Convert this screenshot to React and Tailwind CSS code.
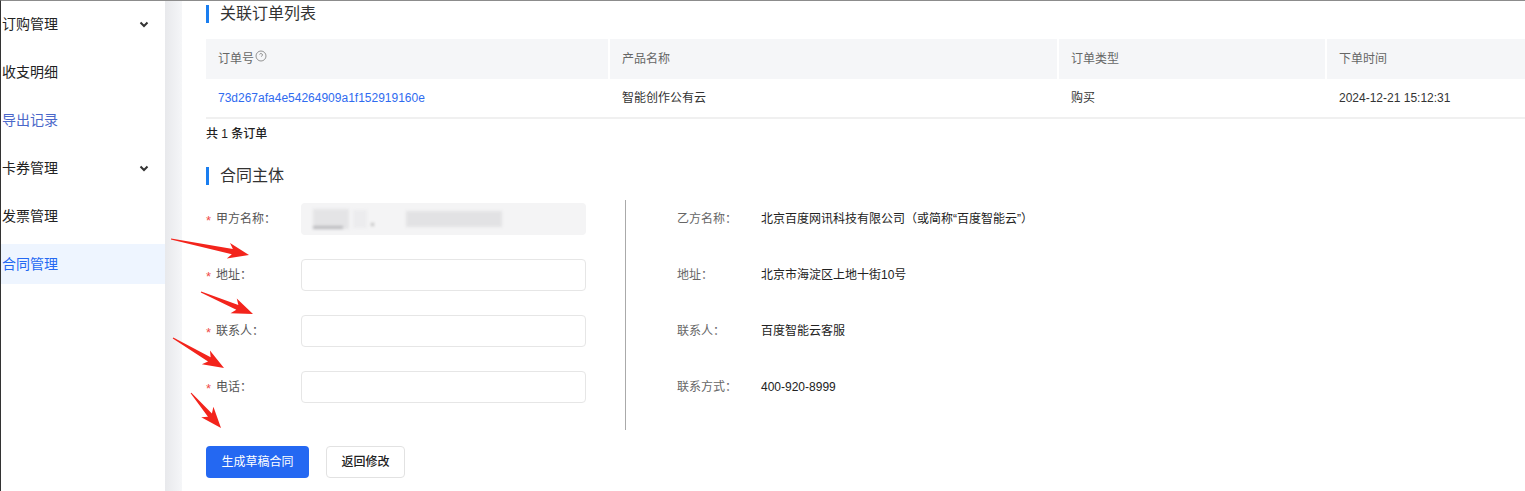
const font = "font-['Liberation_Sans','Noto_Sans_CJK_SC',sans-serif]"

const menu = [
  { label: '订购管理', arrow: true },
  { label: '收支明细' },
  { label: '导出记录', tone: 'text-[#4a67c9]' },
  { label: '卡券管理', arrow: true },
  { label: '发票管理' },
  { label: '合同管理', active: true },
]

const Chevron = () => (
  <svg width="10" height="7" viewBox="0 0 10 7" className="absolute left-[138px] top-[17px]">
    <polyline points="1.5,1.5 5,5 8.5,1.5" fill="none" stroke="#333" strokeWidth="2" />
  </svg>
)

const Sidebar = () => (
  <div className="flex w-[164px] shrink-0 flex-col pt-[3px]">
    {menu.map((m) => (
      <div
        key={m.label}
        className={`relative mb-2 flex h-10 items-center pl-px text-[14px] ${
          m.active ? 'bg-[#eef5ff] text-[#2468f2]' : m.tone || 'text-[#222]'
        }`}
      >
        {m.label}
        {m.arrow && <Chevron />}
      </div>
    ))}
  </div>
)

const Heading = ({ children }) => (
  <div className="flex h-[18px] items-center">
    <span className="h-[18px] w-[3px] bg-[#1a7ef0]" />
    <span className="ml-[11px] text-[16px] leading-[18px] text-[#333]">{children}</span>
  </div>
)

const HelpIcon = () => (
  <svg width="12" height="12" viewBox="0 0 24 24" fill="none" stroke="#888" strokeWidth="1.8" className="mb-[6px] ml-px">
    <circle cx="12" cy="12" r="10" />
    <path d="M9.09 9a3 3 0 0 1 5.83 1c0 2-3 3-3 3" />
    <path d="M12 17h.01" />
  </svg>
)

const OrderTable = () => (
  <div className="mt-4 w-[1340px] text-[12px]">
    <div className="flex h-10 bg-[#f5f6f8] text-[#666]">
      <div className="flex w-[402px] items-center pl-3">
        订单号
        <HelpIcon />
      </div>
      <div className="flex w-[449px] items-center border-l-2 border-white pl-3">产品名称</div>
      <div className="flex w-[268px] items-center border-l-2 border-white pl-3">订单类型</div>
      <div className="flex flex-1 items-center border-l-2 border-white pl-3">下单时间</div>
    </div>
    <div className="flex h-10 border-b-2 border-[#f0f0f0] text-[#333]">
      <div className="flex w-[402px] items-center pl-3 text-[#2f6bf0]">73d267afa4e54264909a1f152919160e</div>
      <div className="flex w-[449px] items-center pl-[14px]">智能创作公有云</div>
      <div className="flex w-[268px] items-center pl-[14px]">购买</div>
      <div className="flex flex-1 items-center pl-[14px]">2024-12-21 15:12:31</div>
    </div>
  </div>
)

const leftRows = [
  { label: '甲方名称', disabled: true },
  { label: '地址' },
  { label: '联系人' },
  { label: '电话' },
]

const rightRows = [
  ['乙方名称：', '北京百度网讯科技有限公司（或简称“百度智能云”）'],
  ['地址：', '北京市海淀区上地十街10号'],
  ['联系人：', '百度智能云客服'],
  ['联系方式：', '400-920-8999'],
]

const BlurredName = () => (
  <div className="flex h-full items-center gap-1 pl-3 blur-[1.5px]">
    <div className="flex h-[20px] w-[36px] flex-col justify-end bg-[#e4e4e6]">
      <div className="h-[3px] w-[30px] bg-[#b8b8bc]" />
    </div>
    <div className="h-[18px] w-[14px] bg-[#ececee]" />
    <div className="mb-[9px] h-[3px] w-[3px] self-end bg-[#bbb]" />
    <div className="ml-[28px] h-[16px] w-[96px] bg-[#e2e2e4]" />
  </div>
)

const ContractForm = () => (
  <div className="mt-[15px] flex text-[12px]">
    <div className="w-[420px] border-r border-[#aaa] pt-[3px] pb-[27px]">
      {leftRows.map((r, i) => (
        <div key={r.label} className={`flex h-8 items-center ${i < 3 ? 'mb-6' : ''}`}>
          <span className="w-[10px] pt-[3px] text-[13px] text-[#f04a4a]">*</span>
          <span className="w-[85px] text-[#555]">{r.label}：</span>
          <div
            className={`h-8 w-[285px] rounded ${
              r.disabled ? 'bg-[#f4f4f5]' : 'border border-[#e6e6e6] bg-white'
            }`}
          >
            {r.disabled && <BlurredName />}
          </div>
        </div>
      ))}
    </div>
    <div className="pl-[51px] pt-[3px]">
      {rightRows.map(([k, v], i) => (
        <div key={k} className={`flex h-8 items-center ${i < 3 ? 'mb-6' : ''}`}>
          <span className="w-[84px] text-[#666]">{k}</span>
          <span className="text-[#222]">{v}</span>
        </div>
      ))}
    </div>
  </div>
)

// annotation arrows: tail x,y then tip x,y
const arrows = [
  [170, 238, 248, 254],
  [200, 291, 252, 313],
  [172, 337, 223, 367],
  [190, 392, 220, 427],
]

const arrowPoints = ([x1, y1, x2, y2]) => {
  const dx = x2 - x1
  const dy = y2 - y1
  const len = Math.hypot(dx, dy)
  const ux = dx / len
  const uy = dy / len
  const nx = -uy
  const ny = ux
  const hl = 17
  const bx = x2 - ux * hl
  const by = y2 - uy * hl
  const wx = x2 - ux * (hl + 4)
  const wy = y2 - uy * (hl + 4)
  const pts = [
    [x1 + nx * 0.5, y1 + ny * 0.5],
    [bx + nx * 2.6, by + ny * 2.6],
    [wx + nx * 8, wy + ny * 8],
    [x2, y2],
    [wx - nx * 8, wy - ny * 8],
    [bx - nx * 2.6, by - ny * 2.6],
    [x1 - nx * 0.5, y1 - ny * 0.5],
  ]
  return pts.map((p) => p.join(',')).join(' ')
}

const Arrows = () => (
  <svg className="pointer-events-none absolute left-0 top-0" width="1525" height="491">
    {arrows.map((a, i) => (
      <polygon key={i} points={arrowPoints(a)} fill="#f3241c" />
    ))}
  </svg>
)

export default function App() {
  return (
    <div className={`relative h-[491px] w-[1525px] overflow-hidden border-l border-t border-l-[#333] border-t-[#8c8c8c] bg-white ${font}`}>
      <div className="flex h-full">
        <Sidebar />
        <div className="w-[17px] shrink-0 bg-gradient-to-r from-[#e8e9ec] to-[#f5f6f8]" />
        <div className="min-w-0 flex-1 overflow-hidden pl-6 pt-[4px]">
          <Heading>关联订单列表</Heading>
          <OrderTable />
          <div className="mt-[5px] h-5 text-[12px] font-medium leading-5 text-[#222]">共 1 条订单</div>
          <div className="mt-[23px]">
            <Heading>合同主体</Heading>
          </div>
          <ContractForm />
          <div className="mt-4 flex gap-[17px] text-[12px]">
            <button className="h-8 w-[103px] rounded bg-[#2468f2] text-white">生成草稿合同</button>
            <button className="h-8 w-[79px] rounded border border-[#e2e2e2] bg-white font-medium text-[#222]">返回修改</button>
          </div>
        </div>
      </div>
      <Arrows />
    </div>
  )
}
